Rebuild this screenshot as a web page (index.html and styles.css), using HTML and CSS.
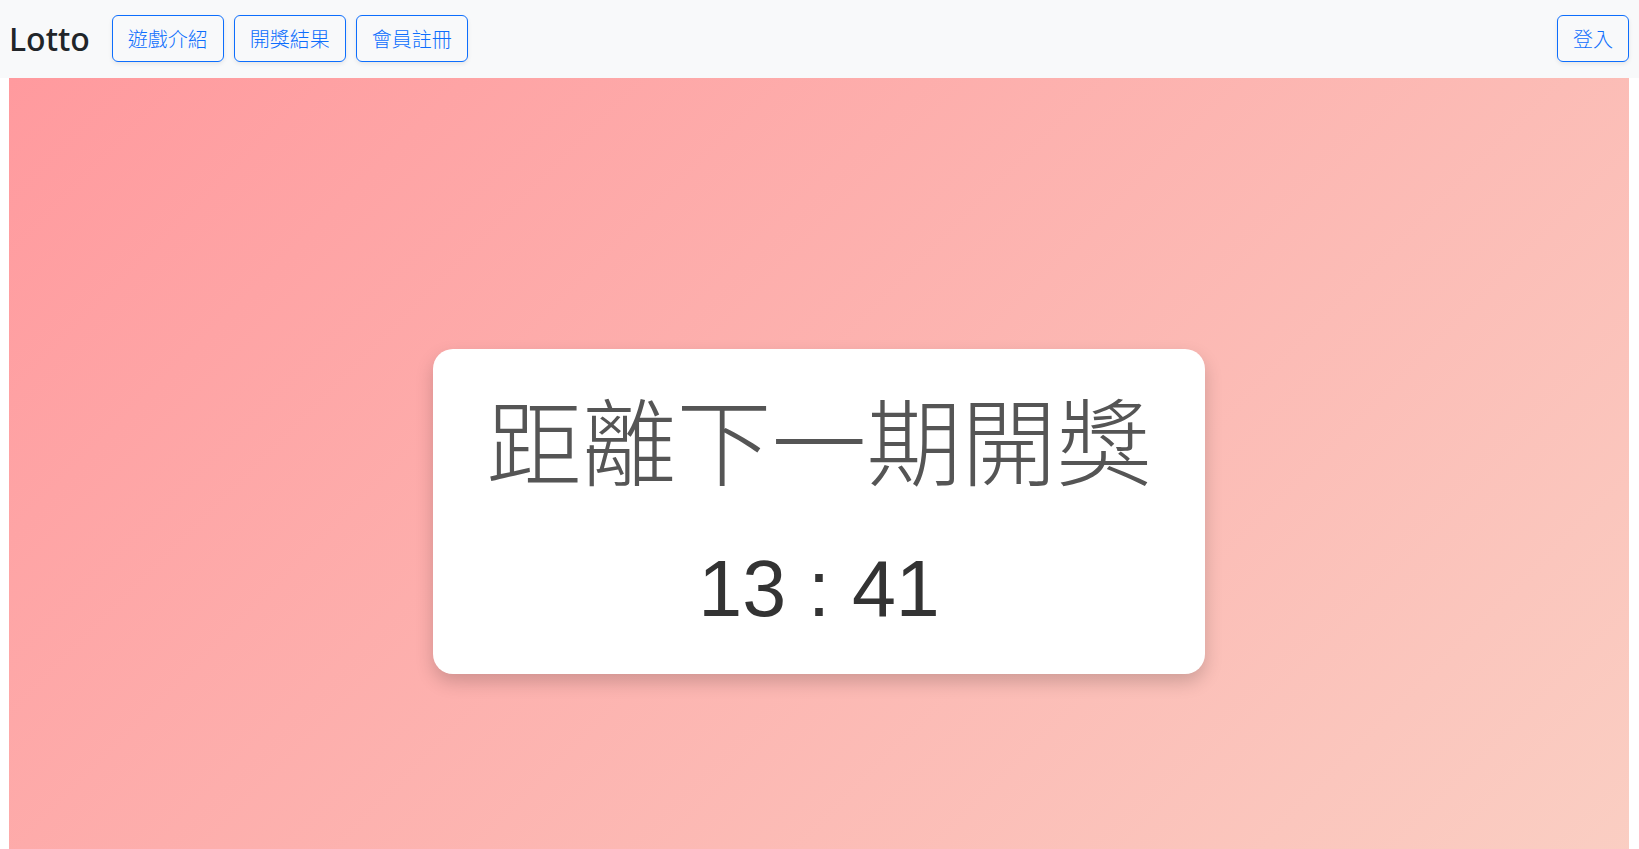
FILE: index.html
```html
<!DOCTYPE html>
<html lang="zh-Hant">
<head>
<meta charset="utf-8">
<title>Lotto</title>
<link rel="stylesheet" href="styles.css">
</head>
<body>
<nav class="navbar">
  <div class="nav-left">
    <span class="brand">Lotto</span>
    <a class="btn" href="#">遊戲介紹</a>
    <a class="btn" href="#">開獎結果</a>
    <a class="btn" href="#">會員註冊</a>
  </div>
  <a class="btn" href="#">登入</a>
</nav>
<main class="hero">
  <div class="card">
    <div class="card-title">距離下一期開獎</div>
    <div class="countdown">13 : 41</div>
  </div>
</main>
</body>
</html>
```

FILE: styles.css
```css
html, body {
  margin: 0;
  padding: 0;
  background: #fff;
}
body {
  font-family: "Noto Sans", "Noto Sans CJK TC", sans-serif;
}
.navbar {
  background: #f8f9fa;
  height: 78px;
  box-sizing: border-box;
  padding: 15px 10px 0 9px;
  display: flex;
  justify-content: space-between;
  align-items: flex-start;
}
.nav-left {
  display: flex;
  align-items: center;
  gap: 10px;
}
.brand {
  font-family: "Noto Sans", sans-serif;
  font-weight: 500;
  font-size: 32px;
  color: #212529;
  line-height: 47px;
  margin-right: 12px;
}
.btn {
  display: inline-block;
  font-family: "Noto Sans CJK TC", sans-serif;
  font-weight: 300;
  font-size: 20px;
  line-height: 30px;
  padding: 7.5px 15px;
  color: #0d6efd;
  border: 1px solid #0d6efd;
  border-radius: 6px;
  text-decoration: none;
  box-shadow: 0 2px 4px rgba(0, 0, 0, 0.08);
  background: transparent;
}
.hero {
  margin: 0 10px 0 9px;
  height: 867px;
  background: linear-gradient(135deg, #ff9a9e 0%, #fad0c4 100%);
  display: flex;
  align-items: center;
  justify-content: center;
}
.card {
  background: #fff;
  border-radius: 20px;
  box-shadow: 0 8px 18px rgba(0, 0, 0, 0.18);
  width: 772px;
  box-sizing: border-box;
  padding: 34px 0 36px;
  text-align: center;
}
.card-title {
  font-family: "Noto Sans CJK TC", sans-serif;
  font-weight: 300;
  font-size: 95px;
  line-height: 110px;
  color: #555;
}
.countdown {
  font-family: "Liberation Sans", Arial, sans-serif;
  font-size: 79px;
  line-height: 98px;
  color: #333;
  margin-top: 47px;
}
```
